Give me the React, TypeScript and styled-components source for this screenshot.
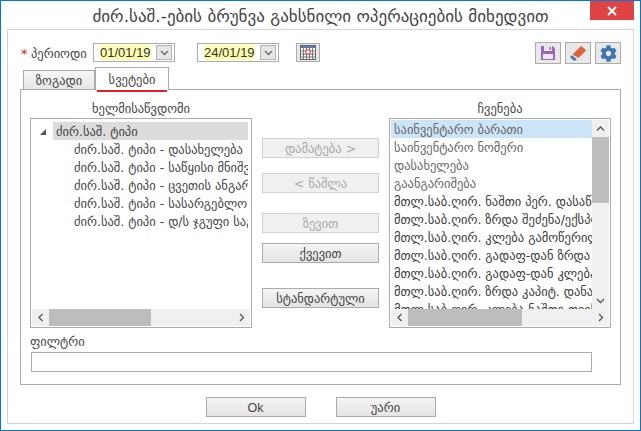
import React from "react";
import styled, { createGlobalStyle } from "styled-components";
import { FaCog } from "react-icons/fa";

const GlobalStyle = createGlobalStyle`
  html, body {
    margin: 0;
    padding: 0;
    background: #fff;
  }
  * {
    box-sizing: border-box;
  }
`;

const fontStack = `"DejaVu Sans", "Noto Sans", sans-serif`;
const lineColor = "#ababab";

const Window = styled.div`
  width: 641px;
  height: 431px;
  border: 1px solid #0078d7;
  background: #fff;
  display: flex;
  flex-direction: column;
  font-family: ${fontStack};
  font-size: 12.5px;
  color: #444;
  overflow: hidden;
`;

const TitleBar = styled.div`
  height: 28px;
  flex: none;
  display: grid;
  grid-template-columns: 1fr auto 1fr;
  align-items: start;
`;

const Title = styled.div`
  font-size: 17px;
  line-height: 28px;
  padding-top: 1px;
  color: #444;
  white-space: nowrap;
`;

const CloseButton = styled.div`
  grid-column: 3;
  justify-self: end;
  width: 44px;
  height: 19px;
  margin-right: 6px;
  background: #e04343;
  display: flex;
  align-items: center;
  justify-content: center;
`;

const Panel = styled.div`
  flex: 1;
  margin: 0 6px 6px;
  border: 1px solid #d4d4d4;
  padding-top: 12px;
  display: flex;
  flex-direction: column;
`;

const Toolbar = styled.div`
  height: 22px;
  display: flex;
  align-items: center;
  padding: 0 12px 0 13px;
`;

const Star = styled.span`
  color: #e02020;
  font-size: 13px;
  width: 10px;
`;

const PeriodLabel = styled.span`
  width: 62px;
`;

const DateCombo = styled.div<{ $gap?: number }>`
  width: 82px;
  height: 19px;
  margin: 0 0 2px ${(p) => p.$gap ?? 0}px;
  border: 1px solid ${lineColor};
  display: flex;
  align-items: center;
  padding: 0 2px 0 6px;
  justify-content: space-between;
`;

const DateText = styled.span`
  background: #ffffb0;
  font-family: "Liberation Sans", sans-serif;
  font-size: 13px;
  line-height: 15px;
  color: #333;
`;

const ComboArrow = styled.div`
  width: 16px;
  height: 15px;
  background: #e6e6e6;
  border: 1px solid #b4b4b4;
  display: flex;
  align-items: center;
  justify-content: center;
`;

const CalendarButton = styled.div`
  width: 24px;
  height: 19px;
  margin: 0 0 2px 17px;
  border: 1px solid ${lineColor};
  background: #e8e8e8;
  display: flex;
  align-items: center;
  justify-content: center;
`;

const ToolActions = styled.div`
  margin-left: auto;
  display: flex;
  gap: 4px;
`;

const IconButton = styled.div`
  width: 26px;
  height: 22px;
  border: 1px solid ${lineColor};
  background: #e8e8e8;
  display: flex;
  align-items: center;
  justify-content: center;
  color: #3b76b0;
`;

const TabRow = styled.div`
  height: 23px;
  margin: 3px 0 -1px 15px;
  display: flex;
  align-items: flex-end;
  position: relative;
  z-index: 1;
`;

const Tab = styled.div<{ $active?: boolean }>`
  position: relative;
  height: ${(p) => (p.$active ? 23 : 20)}px;
  width: ${(p) => (p.$active ? 74 : 72)}px;
  border: 1px solid ${lineColor};
  border-bottom: ${(p) => (p.$active ? "none" : `1px solid ${lineColor}`)};
  background: ${(p) => (p.$active ? "#fff" : "linear-gradient(#f6f6f6, #e6e6e6)")};
  display: flex;
  align-items: center;
  justify-content: center;
`;

const TabMark = styled.div`
  position: absolute;
  left: 1px;
  right: 1px;
  bottom: -2px;
  height: 2px;
  background: #e81c24;
`;

const TabPanel = styled.div`
  height: 296px;
  margin-left: 12px;
  width: 601px;
  border: 1px solid ${lineColor};
  padding: 10px 9px 0;
  display: flex;
  flex-direction: column;
`;

const Columns = styled.div`
  display: grid;
  grid-template-columns: 222px 117px 222px;
  column-gap: 10px;
`;

const ListColumn = styled.div`
  display: flex;
  flex-direction: column;
`;

const ListHeading = styled.div`
  height: 18px;
  line-height: 18px;
  text-align: center;
`;

const ListBox = styled.div`
  height: 210px;
  border: 1px solid ${lineColor};
  padding: 1px;
  display: flex;
  flex-direction: column;
`;

const ListBody = styled.div`
  height: 191px;
  display: flex;
  overflow: hidden;
`;

const Rows = styled.div<{ $top?: number }>`
  flex: 1;
  min-width: 0;
  padding-top: ${(p) => p.$top ?? 0}px;
  overflow: hidden;
`;

const TreeRow = styled.div<{ $child?: boolean; $selected?: boolean }>`
  height: 18px;
  line-height: 20px;
  white-space: nowrap;
  overflow: hidden;
  margin: 0 2px 0 21px;
  padding-left: ${(p) => (p.$child ? 21 : 3)}px;
  background: ${(p) => (p.$selected ? "#dcdcdc" : "transparent")};
`;

const TreeHead = styled.div`
  position: relative;
`;

const TreeToggle = styled.svg`
  position: absolute;
  left: 7px;
  top: 6px;
`;

const ColumnRow = styled.div<{ $selected?: boolean; $muted?: boolean }>`
  height: 18px;
  line-height: 20px;
  padding-left: 3px;
  white-space: nowrap;
  overflow: hidden;
  background: ${(p) => (p.$selected ? "#cce4f7" : "transparent")};
  color: ${(p) => (p.$muted ? "#666" : "#3a3a3a")};
`;

const VScroll = styled.div`
  width: 17px;
  flex: none;
  background: #f0f0f0;
  display: flex;
  flex-direction: column;
`;

const VThumb = styled.div<{ $size: number }>`
  height: ${(p) => p.$size}px;
  background: #bdbdbd;
`;

const HScroll = styled.div`
  height: 17px;
  flex: none;
  background: #f0f0f0;
  display: flex;
  align-items: stretch;
`;

const HThumb = styled.div<{ $size: number }>`
  width: ${(p) => p.$size}px;
  background: #bdbdbd;
`;

const ScrollEnd = styled.div<{ $push?: boolean }>`
  width: 17px;
  height: 17px;
  flex: none;
  margin-left: ${(p) => (p.$push ? "auto" : 0)};
  margin-top: ${(p) => (p.$push ? "auto" : 0)};
  display: flex;
  align-items: center;
  justify-content: center;
`;

const MoveColumn = styled.div`
  padding-top: 38px;
  display: flex;
  flex-direction: column;
`;

const Button = styled.div<{ $disabled?: boolean; $gap?: number; $width?: number }>`
  width: ${(p) => p.$width ?? 117}px;
  height: 20px;
  margin-top: ${(p) => p.$gap ?? 0}px;
  padding-top: 1px;
  border: 1px solid ${(p) => (p.$disabled ? "#d2d2d2" : lineColor)};
  background: ${(p) => (p.$disabled ? "#f0f0f0" : "linear-gradient(#f4f4f4, #e4e4e4)")};
  color: ${(p) => (p.$disabled ? "#a8a8a8" : "#444")};
  display: flex;
  align-items: center;
  justify-content: center;
  line-height: 18px;
`;

const FilterLabel = styled.div`
  margin-top: 4px;
  height: 20px;
  line-height: 20px;
`;

const FilterInput = styled.div`
  width: 561px;
  height: 20px;
  margin-left: 1px;
  border: 1px solid ${lineColor};
`;

const Footer = styled.div`
  margin-top: 12px;
  display: flex;
  justify-content: center;
  gap: 30px;
`;

const OkText = styled.span`
  font-family: "Liberation Sans", sans-serif;
  font-size: 12.5px;
`;

function Chevron({ dir, color = "#555", size = 9 }: { dir: "up" | "down" | "left" | "right"; color?: string; size?: number }) {
  const points = {
    up: "1,6.5 4.5,3 8,6.5",
    down: "1,3 4.5,6.5 8,3",
    left: "6.5,1 3,4.5 6.5,8",
    right: "3,1 6.5,4.5 3,8"
  }[dir];
  return (
    <svg width={size} height={size} viewBox="0 0 9 9">
      <polyline points={points} fill="none" stroke={color} strokeWidth="1.3" />
    </svg>
  );
}

function SaveIcon() {
  return (
    <svg width="16" height="16" viewBox="0 0 16 16">
      <path d="M1 1h11.5L15 3.5V15H1z" fill="#9a68b4" />
      <rect x="4" y="1" width="8" height="5" fill="#e8e8e8" />
      <rect x="9.5" y="2" width="1.5" height="3" fill="#9a68b4" />
      <rect x="3" y="9" width="10" height="5" fill="#e8e8e8" />
    </svg>
  );
}

function EraserIcon() {
  return (
    <svg width="18" height="16" viewBox="0 0 18 16">
      <path d="M3.5 9.5L11.5 1.5a1 1 0 0 1 1.4 0l3.6 3.2a1 1 0 0 1 0 1.4L9.5 13z" fill="#df6342" />
      <path d="M2.8 10.2L7.8 14.2 6.8 15.4H4.6L1 12z" fill="#3b76b0" />
    </svg>
  );
}

function CalendarIcon() {
  return (
    <svg width="16" height="15" viewBox="0 0 16 15">
      <rect x="0.5" y="0.5" width="15" height="14" fill="#fff" stroke="#666" />
      <rect x="1" y="1" width="14" height="2" fill="#5b7fa8" />
      <path d="M0.5 6h15M0.5 9h15M0.5 12h15M3.5 3v11M6.5 3v11M9.5 3v11M12.5 3v11" stroke="#777" strokeWidth="1" />
      <rect x="6" y="5" width="4" height="4" fill="#fff" stroke="#e04030" />
    </svg>
  );
}

const treeChildren = [
  "ძირ.საშ. ტიპი - დასახელება",
  "ძირ.საშ. ტიპი - საწყისი მნიშვნელობა",
  "ძირ.საშ. ტიპი - ცვეთის ანგარიში",
  "ძირ.საშ. ტიპი - სასარგებლო ვადა",
  "ძირ.საშ. ტიპი - დ/ს ჯგუფი საგადასახადო"
];

const shownColumns = [
  { text: "საინვენტარო ბარათი", selected: true, muted: true },
  { text: "საინვენტარო ნომერი", muted: true },
  { text: "დასახელება", muted: true },
  { text: "გაანგარიშება", muted: true },
  { text: "მთლ.საბ.ღირ. ნაშთი პერ. დასაწყისში" },
  { text: "მთლ.საბ.ღირ. ზრდა შეძენა/ექსპლუატაცია" },
  { text: "მთლ.საბ.ღირ. კლება გამოწერილი" },
  { text: "მთლ.საბ.ღირ. გადაფ-დან ზრდა" },
  { text: "მთლ.საბ.ღირ. გადაფ-დან კლება" },
  { text: "მთლ.საბ.ღირ. ზრდა კაპიტ. დანახარჯი" },
  { text: "მთლ.საბ.ღირ. კლება ნაშთი თვის" }
];

export default function App() {
  return (
    <Window>
      <GlobalStyle />
      <TitleBar>
        <span />
        <Title>ძირ.საშ.-ების ბრუნვა გახსნილი ოპერაციების მიხედვით</Title>
        <CloseButton>
          <svg width="10" height="10" viewBox="0 0 10 10">
            <path d="M1 1l8 8M9 1l-8 8" stroke="#fff" strokeWidth="2" />
          </svg>
        </CloseButton>
      </TitleBar>
      <Panel>
        <Toolbar>
          <Star>*</Star>
          <PeriodLabel>პერიოდი</PeriodLabel>
          <DateCombo>
            <DateText>01/01/19</DateText>
            <ComboArrow>
              <Chevron dir="down" color="#666" />
            </ComboArrow>
          </DateCombo>
          <DateCombo $gap={22}>
            <DateText>24/01/19</DateText>
            <ComboArrow>
              <Chevron dir="down" color="#666" />
            </ComboArrow>
          </DateCombo>
          <CalendarButton>
            <CalendarIcon />
          </CalendarButton>
          <ToolActions>
            <IconButton>
              <SaveIcon />
            </IconButton>
            <IconButton>
              <EraserIcon />
            </IconButton>
            <IconButton>
              <FaCog size={17} />
            </IconButton>
          </ToolActions>
        </Toolbar>
        <TabRow>
          <Tab>ზოგადი</Tab>
          <Tab $active>
            სვეტები
            <TabMark />
          </Tab>
        </TabRow>
        <TabPanel>
          <Columns>
            <ListColumn>
              <ListHeading>ხელმისაწვდომი</ListHeading>
              <ListBox>
                <ListBody>
                  <Rows $top={2}>
                    <TreeHead>
                      <TreeToggle width="8" height="8" viewBox="0 0 8 8">
                        <polygon points="7,1 7,7 1,7" fill="#555" />
                      </TreeToggle>
                      <TreeRow $selected>ძირ.საშ. ტიპი</TreeRow>
                    </TreeHead>
                    {treeChildren.map((text) => (
                      <TreeRow key={text} $child>
                        {text}
                      </TreeRow>
                    ))}
                  </Rows>
                </ListBody>
                <HScroll>
                  <ScrollEnd>
                    <Chevron dir="left" />
                  </ScrollEnd>
                  <HThumb $size={102} />
                  <ScrollEnd $push>
                    <Chevron dir="right" />
                  </ScrollEnd>
                </HScroll>
              </ListBox>
            </ListColumn>
            <MoveColumn>
              <Button $disabled>დამატება &gt;</Button>
              <Button $disabled $gap={15}>
                &lt; წაშლა
              </Button>
              <Button $disabled $gap={20}>
                ზევით
              </Button>
              <Button $gap={10}>ქვევით</Button>
              <Button $gap={25}>სტანდარტული</Button>
            </MoveColumn>
            <ListColumn>
              <ListHeading>ჩვენება</ListHeading>
              <ListBox>
                <ListBody>
                  <Rows>
                    {shownColumns.map((row) => (
                      <ColumnRow key={row.text} $selected={row.selected} $muted={row.muted}>
                        {row.text}
                      </ColumnRow>
                    ))}
                  </Rows>
                  <VScroll>
                    <ScrollEnd>
                      <Chevron dir="up" />
                    </ScrollEnd>
                    <VThumb $size={66} />
                    <ScrollEnd $push>
                      <Chevron dir="down" />
                    </ScrollEnd>
                  </VScroll>
                </ListBody>
                <HScroll>
                  <ScrollEnd>
                    <Chevron dir="left" />
                  </ScrollEnd>
                  <HThumb $size={114} />
                  <ScrollEnd $push>
                    <Chevron dir="right" />
                  </ScrollEnd>
                </HScroll>
              </ListBox>
            </ListColumn>
          </Columns>
          <FilterLabel>ფილტრი</FilterLabel>
          <FilterInput />
        </TabPanel>
        <Footer>
          <Button $width={100}>
            <OkText>Ok</OkText>
          </Button>
          <Button $width={100}>უარი</Button>
        </Footer>
      </Panel>
    </Window>
  );
}
